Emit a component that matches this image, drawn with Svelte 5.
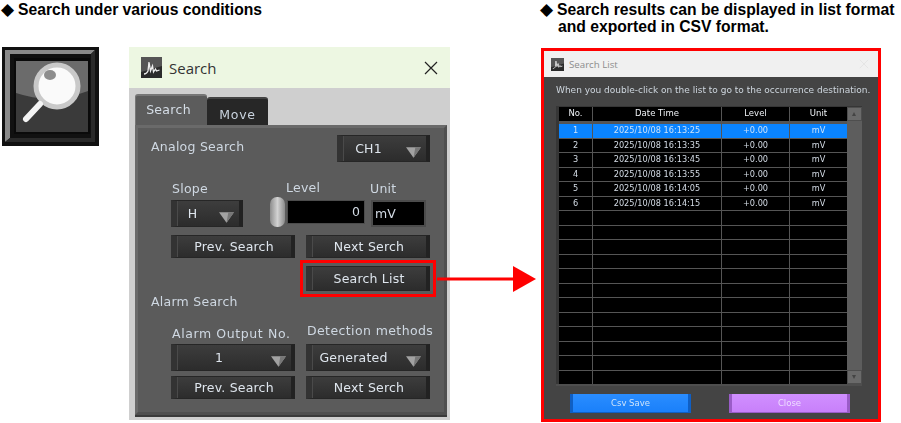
<script>
  const results = [
    '2025/10/08 16:13:25',
    '2025/10/08 16:13:35',
    '2025/10/08 16:13:45',
    '2025/10/08 16:13:55',
    '2025/10/08 16:14:05',
    '2025/10/08 16:14:15'
  ]
  // list always shows 18 rows, unused ones stay blank
  const rows = Array.from({ length: 18 }, (_, i) => results[i] ?? null)
</script>

{#snippet appIcon()}
  <svg class="app-icon" viewBox="0 0 21 21">
    <rect width="21" height="21" fill="#2b2b2b" />
    <path d="M0 0h21v9L0 15z" fill="#555" />
    <path d="M3 17c2 0 3-1 4-3l1-9 1.500 9 2-5 1 6 2-3 1 2 3-1" fill="none" stroke="#eee" stroke-width="1.300" />
  </svg>
{/snippet}

{#snippet drop(label, cls)}
  <div class="btn drop {cls}">
    <span>{label}</span>
    <svg viewBox="0 0 16 12"><path d="M0 1h16L8 12z" fill="#a2a2a2" /><path d="M16 1L8 12 10 1z" fill="#777" /></svg>
  </div>
{/snippet}

<div class="page">
  <section class="left">
    <h2><span class="dia">◆</span>Search under various conditions</h2>
    <div class="left-body">
      <div class="tool-icon">
        <svg viewBox="0 0 97 99">
          <rect width="97" height="99" fill="#111" />
          <path d="M3 3h90l-4 4H8v84l-5 4z" fill="#8a8a8a" />
          <path d="M93 3v92H3l5-4h81V7z" fill="#2a2a2a" />
          <rect x="12" y="11" width="76" height="76" fill="#0a0a0a" />
          <rect x="14" y="14" width="72" height="71" fill="#3a3a3a" />
          <path d="M14 14h72v30Q50 58 14 46z" fill="#6b6b6b" />
          <circle cx="55" cy="39" r="21" fill="#fafafa" stroke="#c9c9c9" stroke-width="5" />
          <ellipse cx="48" cy="28" rx="6" ry="5" fill="#8d8d8d" />
          <path d="M38 57L24 72" stroke="#f4f4f4" stroke-width="6" stroke-linecap="round" />
        </svg>
      </div>

      <div class="search-win">
        <header class="win-title">
          {@render appIcon()}
          <span>Search</span>
          <svg class="x" viewBox="0 0 14 14"><path d="M1 1l12 12M13 1L1 13" stroke="#222" stroke-width="1.200" /></svg>
        </header>
        <div class="win-body">
          <div class="tabs">
            <div class="tab on">Search</div>
            <div class="tab">Move</div>
          </div>
          <div class="panel">
            <div class="row-analog">
              <span class="lbl">Analog Search</span>
              {@render drop('CH1', 'ch')}
            </div>

            <div class="row-level">
              <div class="col">
                <span class="lbl slope-l">Slope</span>
                {@render drop('H', 'slope')}
              </div>
              <div class="col level-col">
                <span class="lbl level-l">Level</span>
                <div class="level-ctl">
                  <div class="spin"></div>
                  <div class="field num">0</div>
                </div>
              </div>
              <div class="col unit-col">
                <span class="lbl unit-l">Unit</span>
                <div class="unit-wrap"><div class="field">mV</div></div>
              </div>
            </div>

            <div class="row-btns">
              <div class="btn">Prev. Search</div>
              <div class="btn">Next Serch</div>
            </div>
            <div class="row-list">
              <div class="btn hl">Search List</div>
            </div>

            <span class="lbl alarm">Alarm Search</span>
            <div class="row-alarm-l">
              <span class="lbl out">Alarm Output No.</span>
              <span class="lbl det">Detection methods</span>
            </div>
            <div class="row-btns tight">
              {@render drop('1', 'one')}
              {@render drop('Generated', 'gen')}
            </div>
            <div class="row-btns last">
              <div class="btn">Prev. Search</div>
              <div class="btn">Next Serch</div>
            </div>
          </div>
        </div>
      </div>
    </div>
  </section>

  <section class="right">
    <h2><span class="dia">◆</span>Search results can be displayed in list format<br /><span class="cont">and exported in CSV format.</span></h2>
    <div class="list-frame">
      <header class="list-title">
        {@render appIcon()}
        <span>Search List</span>
        <svg class="x" viewBox="0 0 12 12"><path d="M1 1l10 10M11 1L1 11" stroke="#e2e2e2" stroke-width="1" /></svg>
      </header>
      <div class="list-body">
        <p class="hint">When you double-click on the list to go to the occurrence destination.</p>
        <div class="grid-wrap">
          <div class="grid">
            <div class="tr head">
              <div>No.</div><div>Date Time</div><div>Level</div><div>Unit</div>
            </div>
            {#each rows as r, i}
              <div class="tr" class:sel={i === 0}>
                {#if r}
                  <div>{i + 1}</div><div>{r}</div><div>+0.00</div><div>mV</div>
                {:else}
                  <div></div><div></div><div></div><div></div>
                {/if}
              </div>
            {/each}
          </div>
          <div class="scroll">
            <div class="sb up"></div>
            <div class="sb down"></div>
          </div>
        </div>
        <div class="foot">
          <div class="cbtn blue">Csv Save</div>
          <div class="cbtn purple">Close</div>
        </div>
      </div>
    </div>
  </section>

  <!-- callout from the Search List button over to the list window -->
  <svg class="arrow" viewBox="0 0 100 28">
    <path d="M0 14h78" stroke="#f00" stroke-width="3" />
    <path d="M76 1l23 13-23 13z" fill="#f00" />
  </svg>
</div>

<style>
  :global(body) {
    background: #fff;
  }

  .page {
    position: relative;
    width: 901px;
    height: 423px;
    display: flex;
    overflow: hidden;
    font-family: "Liberation Sans", Arial, sans-serif;
  }

  h2 {
    margin: 0;
    font-size: 15.700px;
    line-height: 17px;
    font-weight: 700;
    color: #000;
    white-space: nowrap;
  }

  .dia {
    display: inline-block;
    width: 16px;
    font-size: 17px;
    line-height: 17px;
    vertical-align: top;
    font-family: "DejaVu Sans", sans-serif;
    font-weight: 400;
    margin-left: -1px;
    margin-right: 1px;
  }

  .left {
    width: 541px;
    padding: 1px 0 0 2px;
    box-sizing: border-box;
  }

  .left-body {
    display: flex;
    margin-top: 29px;
    align-items: flex-start;
  }

  .tool-icon {
    width: 97px;
    height: 99px;
    margin-right: 30px;
    filter: blur(0.7px);
  }

  .tool-icon svg {
    display: block;
    width: 100%;
    height: 100%;
  }

  .search-win {
    width: 321px;
    height: 373px;
    display: flex;
    flex-direction: column;
    font-family: "DejaVu Sans", sans-serif;
  }

  .win-title {
    height: 41px;
    flex: none;
    background: #edf7e2;
    display: flex;
    align-items: center;
    padding: 0 12px 0 12px;
    font-family: "Open Sans", sans-serif;
    font-size: 15px;
    color: #333;
  }

  .app-icon {
    width: 21px;
    height: 21px;
    margin-right: 7px;
    flex: none;
  }

  .win-title .x {
    width: 14px;
    height: 14px;
    margin-left: auto;
  }

  .win-body {
    flex: 1;
    background: #cfcfcf;
    padding: 6px 3px 5px 6px;
    display: flex;
    flex-direction: column;
    filter: blur(0.35px);
  }

  .tabs {
    display: flex;
    height: 31px;
    flex: none;
  }

  .tab {
    width: 61px;
    background: #272727;
    color: #c9d3de;
    font-size: 12.500px;
    letter-spacing: 0.8px;
    display: flex;
    align-items: center;
    justify-content: center;
    padding-top: 4px;
    box-sizing: border-box;
    margin-top: 3px;
    border-top: 2px solid #444;
    border-radius: 3px 3px 0 0;
  }

  .tab.on {
    width: 72px;
    background: #5c5c5c;
    margin-top: 0;
    padding: 0 6px 2px 0;
    letter-spacing: 0.3px;
    border-top: 2px solid #777;
    border-left: 1px solid #777;
    color: #d5dde6;
  }

  .panel {
    flex: 1;
    background: #5b5b5b;
    border: 3px solid #4f4f4f;
    border-top-color: #6a6a6a;
    border-left-color: #6a6a6a;
    box-shadow: 0 2px 0 #3a3a3a;
    padding: 7px 14px 0 13px;
    display: flex;
    flex-direction: column;
  }

  .lbl {
    color: #cfd8e2;
    font-size: 12.500px;
    line-height: 16px;
    letter-spacing: 0.25px;
    white-space: nowrap;
  }

  .btn {
    width: 124px;
    height: 23px;
    box-sizing: border-box;
    background: linear-gradient(#3d3d3d, #2c2c2c);
    border: 1px solid #262626;
    border-left: 6px solid #333;
    border-right: 4px solid #222;
    box-shadow: inset 1px 0 0 #4a4a4a;
    color: #dfe6ee;
    font-size: 12.500px;
    letter-spacing: 0.2px;
    display: flex;
    align-items: center;
    justify-content: center;
    white-space: nowrap;
    flex: none;
  }

  .drop {
    position: relative;
    height: 27px;
  }

  .drop svg {
    position: absolute;
    right: 5px;
    top: 10px;
    width: 15px;
    height: 12px;
  }

  .row-analog {
    display: flex;
    align-items: flex-start;
    justify-content: space-between;
    height: 27px;
  }

  .row-analog .lbl {
    margin-top: 4px;
  }

  .drop.ch {
    width: 93px;
  }

  .drop.ch span {
    margin-right: 32px;
  }

  .row-level {
    display: flex;
    margin: 18px 0 0 20px;
    height: 47px;
    align-items: flex-end;
  }

  .col {
    display: flex;
    flex-direction: column;
  }

  .slope-l {
    margin: 0 0 3px 1px;
  }

  .drop.slope {
    width: 72px;
  }

  .drop.slope span {
    margin-right: 31px;
  }

  .level-col {
    margin-left: 27px;
    width: 94px;
  }

  .level-l {
    margin: 0 0 1px 16px;
  }

  .level-ctl {
    display: flex;
    align-items: center;
    height: 30px;
  }

  .spin {
    width: 15px;
    height: 30px;
    border-radius: 7px;
    background: linear-gradient(90deg, #8d8d8d, #d2d2d2 50%, #8a8a8a);
    flex: none;
  }

  .field {
    flex: 1;
    height: 22px;
    background: #000;
    color: #d3dbe5;
    font-size: 12.500px;
    line-height: 22px;
    padding: 0 2px 0 2px;
    box-shadow: 0 0 0 1px #4c4c4c;
  }

  .field.num {
    text-align: right;
    margin-left: 3px;
    padding-right: 4px;
  }

  .unit-col {
    margin-left: 7px;
    width: 55px;
  }

  .unit-l {
    margin: 0 0 3px -1px;
  }

  .unit-wrap {
    height: 27px;
    display: flex;
    align-items: center;
    background: #4b4b4b;
  }

  .unit-wrap .field {
    height: 23px;
    margin: 0 2px 0 2px;
    line-height: 23px;
  }

  .row-btns {
    display: flex;
    gap: 11px;
    margin: 8px 0 0 20px;
  }

  .row-list {
    display: flex;
    justify-content: flex-end;
    margin-top: 8px;
  }

  .hl {
    height: 25px;
    margin-right: 0;
    outline: 3px solid #f00;
    outline-offset: 3px;
  }

  .alarm {
    margin-top: 3px;
  }

  .row-alarm-l {
    display: grid;
    grid-template-columns: 135px auto;
    margin: 16px 0 0 20px;
    height: 16px;
    white-space: nowrap;
  }

  .out {
    margin-left: 1px;
    letter-spacing: 0.6px;
  }

  .det {
    margin: -3px 0 0 1px;
    letter-spacing: 0.4px;
  }

  .row-btns.tight {
    margin-top: 2px;
  }

  .drop.one span {
    margin-right: 30px;
  }

  .drop.gen span {
    margin-right: 31px;
  }

  .row-btns.last {
    margin-top: 5px;
  }

  .right {
    width: 360px;
    padding-top: 1px;
    box-sizing: border-box;
  }

  .cont {
    margin-left: 17px;
  }

  .list-frame {
    width: 340px;
    height: 374px;
    margin-top: 13px;
    box-sizing: border-box;
    border: 3px solid #f00;
    display: flex;
    flex-direction: column;
    font-family: "DejaVu Sans", sans-serif;
  }

  .list-title {
    height: 26px;
    flex: none;
    background: #f0f0f0;
    display: flex;
    align-items: center;
    padding: 0 9px 0 7px;
    font-family: "Open Sans", sans-serif;
    font-size: 9.700px;
    color: #8c8c8c;
  }

  .list-title .app-icon {
    width: 13px;
    height: 13px;
    margin-right: 5px;
  }

  .list-title .x {
    width: 10px;
    height: 10px;
    margin-left: auto;
  }

  .list-body {
    flex: 1;
    background: #444;
    padding: 0 11px 0 12px;
    filter: blur(0.3px);
  }

  .hint {
    margin: 7px 0 0;
    font-size: 9px;
    line-height: 13px;
    color: #ced6de;
    white-space: nowrap;
  }

  .grid-wrap {
    margin-top: 9px;
    width: 306px;
    height: 280px;
    box-sizing: border-box;
    padding: 1px 0 0 3px;
    background: #363636;
    display: flex;
    border-bottom: 2px solid #4e4e4e;
  }

  .grid {
    width: 288px;
    background: #000;
    flex: none;
    overflow: hidden;
  }

  .tr {
    display: grid;
    grid-template-columns: 34px 129px 68px 57px;
    height: 14.500px;
    box-sizing: border-box;
    border-bottom: 1px solid #555;
    color: #d4dce6;
    font-size: 8.200px;
    line-height: 13px;
    text-align: center;
  }

  .tr div {
    border-right: 1px solid #555;
  }

  .tr div:last-child {
    border-right: 0;
  }

  .tr.head {
    height: 17px;
    border-bottom: 3px solid #555;
    color: #eef1f5;
    font-size: 8.500px;
  }

  .tr.sel {
    background: #0a84ff;
    color: #cde3fa;
  }

  .scroll {
    flex: 1;
    background: #5d5d5d;
    display: flex;
    flex-direction: column;
    justify-content: space-between;
  }

  .sb {
    height: 14px;
    background: #6a6a6a;
    border: 1px solid #4e4e4e;
    box-sizing: border-box;
    position: relative;
  }

  .sb::after {
    content: '';
    position: absolute;
    left: 4px;
    top: 4px;
    border-left: 2px solid transparent;
    border-right: 2px solid transparent;
  }

  .sb.up::after {
    border-bottom: 4px solid #444;
  }

  .sb.down::after {
    border-top: 4px solid #444;
  }

  .foot {
    display: flex;
    gap: 38px;
    margin: 8px 0 0 14px;
  }

  .cbtn {
    width: 121px;
    height: 19px;
    box-sizing: border-box;
    font-size: 8.500px;
    line-height: 18px;
    text-align: center;
    border-left: 3px solid;
    border-right: 3px solid;
    border-bottom: 1px solid;
  }

  .blue {
    background: linear-gradient(#2a8dff, #1a80fa);
    border-color: #0f5fc4;
    color: #cfe4fb;
  }

  .purple {
    background: linear-gradient(#d08fff, #c880fa);
    border-color: #9a5cc8;
    color: #eedcff;
  }

  .arrow {
    position: absolute;
    left: 437px;
    top: 265px;
    width: 100px;
    height: 28px;
  }
</style>
